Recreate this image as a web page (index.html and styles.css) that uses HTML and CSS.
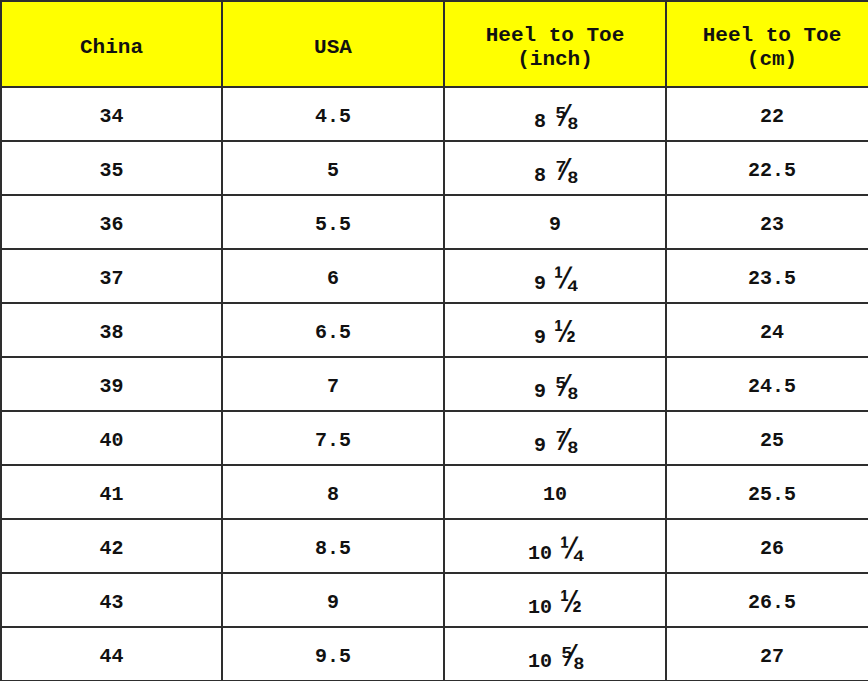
FILE: index.html
```html
<!DOCTYPE html>
<html>
<head>
<meta charset="utf-8">
<link rel="stylesheet" href="styles.css">
</head>
<body>
<div class="sheet">
  <div class="cell head">China</div>
  <div class="cell head">USA</div>
  <div class="cell head">Heel to Toe<br>(inch)</div>
  <div class="cell head">Heel to Toe<br>(cm)</div>

  <div class="cell">34</div><div class="cell">4.5</div><div class="cell frac-cell"><span class="mixed"><span>8</span><span class="frac">⅝</span></span></div><div class="cell">22</div>
  <div class="cell">35</div><div class="cell">5</div><div class="cell frac-cell"><span class="mixed"><span>8</span><span class="frac">⅞</span></span></div><div class="cell">22.5</div>
  <div class="cell">36</div><div class="cell">5.5</div><div class="cell">9</div><div class="cell">23</div>
  <div class="cell">37</div><div class="cell">6</div><div class="cell frac-cell"><span class="mixed"><span>9</span><span class="frac">¼</span></span></div><div class="cell">23.5</div>
  <div class="cell">38</div><div class="cell">6.5</div><div class="cell frac-cell"><span class="mixed"><span>9</span><span class="frac">½</span></span></div><div class="cell">24</div>
  <div class="cell">39</div><div class="cell">7</div><div class="cell frac-cell"><span class="mixed"><span>9</span><span class="frac">⅝</span></span></div><div class="cell">24.5</div>
  <div class="cell">40</div><div class="cell">7.5</div><div class="cell frac-cell"><span class="mixed"><span>9</span><span class="frac">⅞</span></span></div><div class="cell">25</div>
  <div class="cell">41</div><div class="cell">8</div><div class="cell">10</div><div class="cell">25.5</div>
  <div class="cell">42</div><div class="cell">8.5</div><div class="cell frac-cell"><span class="mixed"><span>10</span><span class="frac">¼</span></span></div><div class="cell">26</div>
  <div class="cell">43</div><div class="cell">9</div><div class="cell frac-cell"><span class="mixed"><span>10</span><span class="frac">½</span></span></div><div class="cell">26.5</div>
  <div class="cell">44</div><div class="cell">9.5</div><div class="cell frac-cell"><span class="mixed"><span>10</span><span class="frac">⅝</span></span></div><div class="cell">27</div>
</div>
</body>
</html>
```
FILE: styles.css
```css
html, body {
  margin: 0;
  padding: 0;
  background: #ffffff;
  overflow: hidden;
}
.sheet {
  display: grid;
  grid-template-columns: 221px 222px 222px 212px;
  grid-template-rows: 86px repeat(11, 54px);
  width: 877px;
  border-bottom: 2px solid #2e2e2e;
  font-family: "Liberation Mono", "DejaVu Sans Mono", monospace;
  font-weight: bold;
  font-size: 20px;
  color: #111;
}
.cell {
  box-sizing: border-box;
  border-left: 2px solid #2e2e2e;
  border-top: 2px solid #2e2e2e;
  display: flex;
  align-items: center;
  justify-content: center;
  text-align: center;
  padding-top: 4px;
}
.head {
  background: #ffff00;
  font-size: 21px;
  line-height: 24px;
  padding-top: 7px;
}
.frac-cell {
  padding-top: 12px;
}
.mixed {
  display: inline-flex;
  align-items: baseline;
  gap: 8px;
  line-height: 23px;
}
.frac {
  display: inline-block;
  font-family: "Liberation Sans", "DejaVu Sans", sans-serif;
  font-size: 31px;
  line-height: 20px;
  font-weight: bold;
  transform: scaleX(0.85);
  transform-origin: left bottom;
  margin-right: -4px;
  position: relative;
  top: -1px;
}
```
